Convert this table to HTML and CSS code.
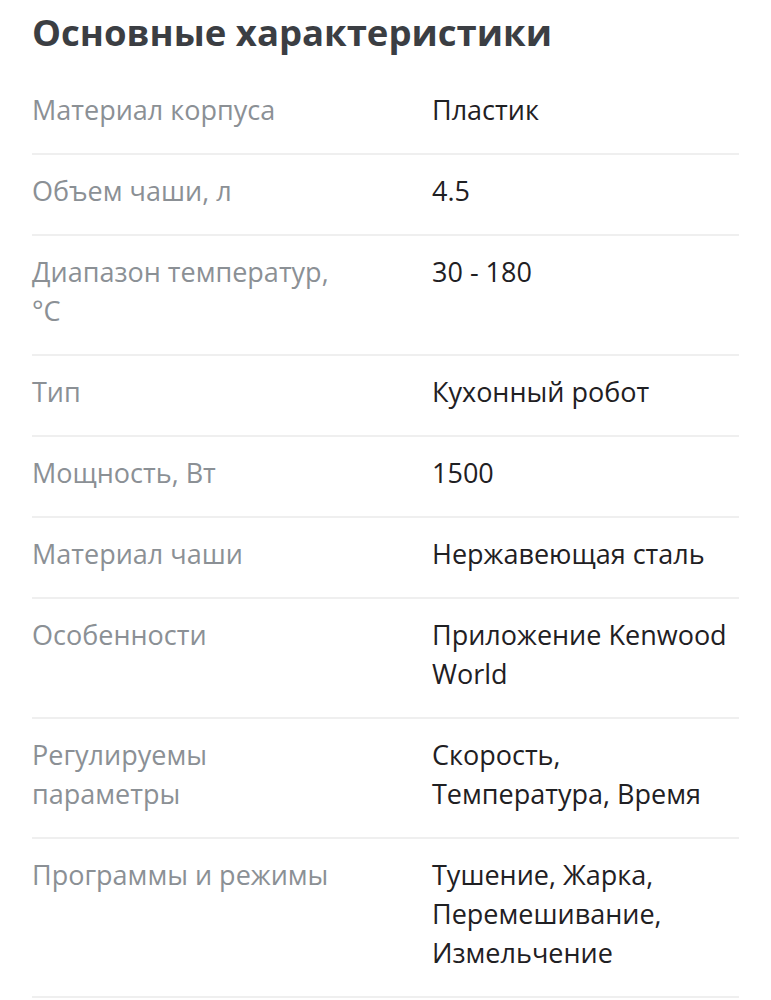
FILE: index.html
```html
<!DOCTYPE html>
<html lang="ru">
<head>
<meta charset="utf-8">
<link rel="stylesheet" href="styles.css">
</head>
<body>
<section class="specs">
  <h2 class="specs-title">Основные характеристики</h2>
  <div class="spec-row"><div class="spec-label">Материал корпуса</div><div class="spec-value">Пластик</div></div>
  <div class="spec-row"><div class="spec-label">Объем чаши, л</div><div class="spec-value">4.5</div></div>
  <div class="spec-row"><div class="spec-label">Диапазон температур, °C</div><div class="spec-value">30 - 180</div></div>
  <div class="spec-row"><div class="spec-label">Тип</div><div class="spec-value">Кухонный робот</div></div>
  <div class="spec-row"><div class="spec-label">Мощность, Вт</div><div class="spec-value">1500</div></div>
  <div class="spec-row"><div class="spec-label">Материал чаши</div><div class="spec-value">Нержавеющая сталь</div></div>
  <div class="spec-row"><div class="spec-label">Особенности</div><div class="spec-value">Приложение Kenwood World</div></div>
  <div class="spec-row"><div class="spec-label">Регулируемы параметры</div><div class="spec-value">Скорость, Температура, Время</div></div>
  <div class="spec-row"><div class="spec-label">Программы и режимы</div><div class="spec-value">Тушение, Жарка, Перемешивание, Измельчение</div></div>
</section>
</body>
</html>
```
FILE: styles.css
```css
html, body {
  margin: 0;
  padding: 0;
  background: #ffffff;
}
body {
  font-family: "Open Sans", "Noto Sans", sans-serif;
}
.specs {
  padding: 0 32px;
  width: 707px;
}
.specs-title {
  margin: 0;
  padding-top: 8px;
  height: 74px;
  box-sizing: border-box;
  font-size: 36.5px;
  line-height: 48px;
  font-weight: 700;
  color: #3b3e43;
}
.spec-row {
  display: grid;
  grid-template-columns: 400px 1fr;
  padding: 16px 0 24px;
  border-bottom: 2px solid #efefef;
  font-size: 27px;
  line-height: 39px;
}
.spec-label {
  color: #8b9095;
  padding-right: 78px;
}
.spec-value {
  color: #1f2023;
}
```
